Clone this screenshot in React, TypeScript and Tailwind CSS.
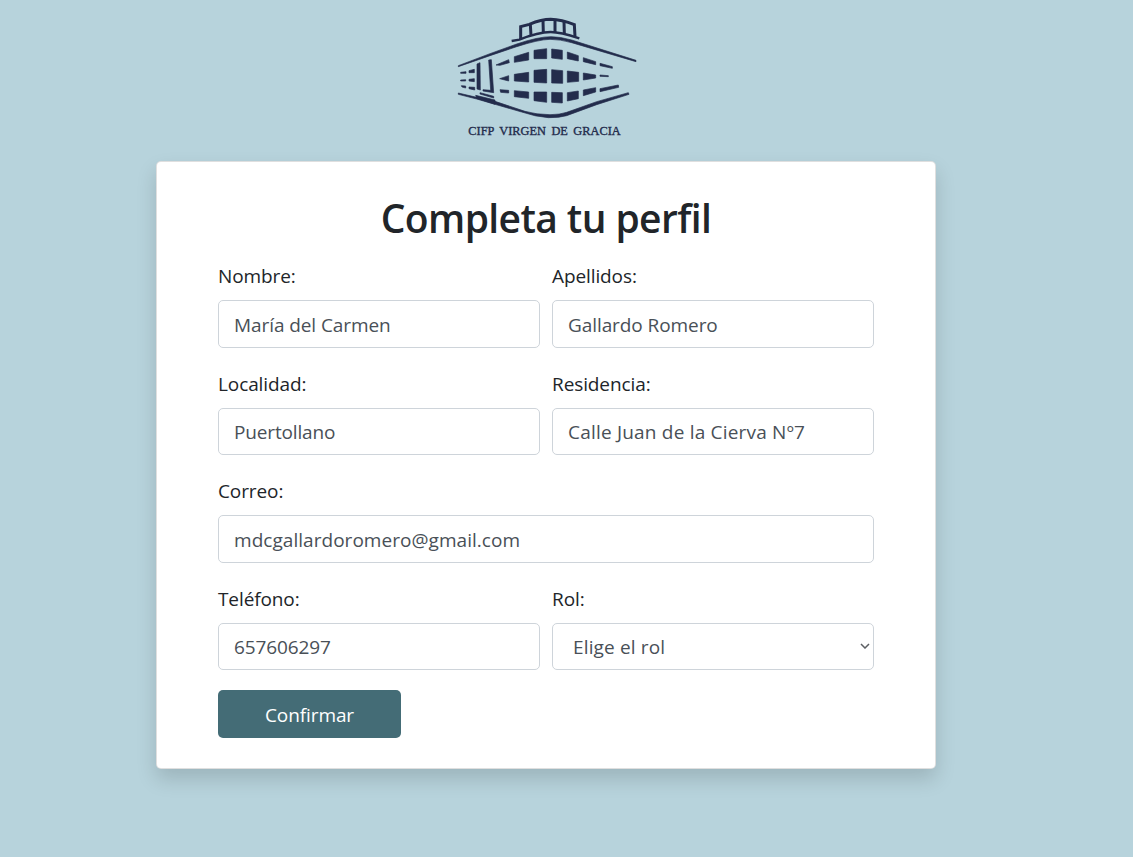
import React from "react";

const ink = "#232c4c";

const windows = [
  "138,165 176,149 178,158 150,166",
  "193,140 236,127 236,150 193,157",
  "252,121 290,116 290,146 252,146",
  "305,117 337,121 337,148 305,144",
  "352,126 385,137 385,153 352,146",
  "400,143 437,155 437,164 400,155",
  "450,160 487,170 487,175 450,167",
  "149,206 176,197 176,213",
  "193,193 236,187 236,216 193,213",
  "252,181 290,178 290,219 252,217",
  "305,179 338,182 338,220 305,219",
  "352,183 386,187 386,214 352,217",
  "400,189 437,195 437,204 400,210",
  "450,195 475,197 475,200 450,199",
  "150,239 176,241 176,249 152,247",
  "193,242 236,246 236,265 193,260",
  "252,246 290,246 290,277 252,272",
  "305,247 337,248 337,279 305,277",
  "352,248 385,243 385,266 352,273",
  "400,240 437,233 437,246 400,257",
  "450,236 505,225 506,232 450,245",
  "32,187 48,185 48,190 32,190",
  "57,182 73,178 73,188 57,188",
  "32,210 47,209 47,213 32,213",
  "57,208 73,206 73,215 57,213",
  "34,227 47,228 47,234 36,231",
  "57,231 74,232 74,240 57,236",
  "81,162 90,158 91,240 81,237",
  "116,150 124,149 131,248 99,243 99,239 122,241",
  "90,248 131,259 131,264 90,252",
  "77,256 135,270 135,283 80,265",
];

function Logo() {
  return (
    <svg className="h-[135px] w-[190px]" viewBox="0 0 570 405" role="img" aria-label="CIFP Virgen de Gracia">
      <g fill={ink} stroke={ink} strokeWidth="2" strokeLinejoin="round">
        {windows.map((points) => (
          <polygon key={points} points={points} />
        ))}
        <path d="M25 167 L120 131 L200 102 Q265 80 303 80 Q330 80 365 90 L558 151 L558 155 L365 98 Q330 88 300 88 Q265 89 200 110 L120 137 L25 170 Z" />
        <path d="M25 249 L80 262 L135 274 L225 304 Q260 314 300 314 Q330 314 350 307 L440 275 L535 248 L537 253 L440 284 L350 317 Q325 324 295 323 Q255 320 215 306 L135 283 L80 267 L25 253 Z" />
      </g>
      <g fill="none" stroke={ink} strokeWidth="9">
        <path d="M185 93 L208 89 Q265 66 302 66 Q330 66 388 85" strokeWidth="7" />
        <path d="M212 88 V50 L238 43 Q275 28 302 28 Q335 29 373 44 L375 80" />
        <path d="M241 44 L243 76 M279 32 L280 68 M315 30 V66 M342 34 L343 71" />
      </g>
      <text
        x="55"
        y="376"
        fill={ink}
        stroke={ink}
        strokeWidth="1"
        fontSize="35"
        wordSpacing="7"
        fontFamily="'Liberation Serif', serif"
        textLength="457"
        lengthAdjust="spacingAndGlyphs"
      >
        CIFP VIRGEN DE GRACIA
      </text>
    </svg>
  );
}

const control =
  "block h-[47.5px] w-full rounded-[5px] border border-[#ced4da] bg-white px-[15px] pt-[2px] text-[19px] text-[#495057] outline-none";

function Field({ id, label, wide, children }: { id: string; label: string; wide?: boolean; children: React.ReactNode }) {
  return (
    <div className={wide ? "col-span-2" : ""}>
      <label htmlFor={id} className="mb-[9px] block h-[31px] pt-px text-[19px] leading-[30px] tracking-[-0.1px]">
        {label}
      </label>
      {children}
    </div>
  );
}

export default function App() {
  return (
    <main className="min-h-[857px] bg-[#b7d3dc] pt-[10px] font-['Open_Sans',sans-serif] text-[#212529]">
      <header className="flex w-[1090px] justify-center">
        <Logo />
      </header>
      <section className="ml-[156px] mt-[16px] h-[608px] w-[780px] rounded-[5px] border border-black/[0.125] bg-white px-[61px] pt-[32px] shadow-[0_10px_20px_rgba(0,0,0,0.15)]">
        <h1 className="h-[48px] text-center text-[39px] font-semibold leading-[47px] tracking-[-0.6px]">Completa tu perfil</h1>
        <form className="mt-[18px]">
          <div className="grid grid-cols-2 gap-x-3 gap-y-5">
            <Field id="nombre" label="Nombre:">
              <input id="nombre" className={`${control} tracking-[-0.08px]`} defaultValue="María del Carmen" />
            </Field>
            <Field id="apellidos" label="Apellidos:">
              <input id="apellidos" className={`${control} tracking-[-0.08px]`} defaultValue="Gallardo Romero" />
            </Field>
            <Field id="localidad" label="Localidad:">
              <input id="localidad" className={`${control} tracking-[-0.15px]`} defaultValue="Puertollano" />
            </Field>
            <Field id="residencia" label="Residencia:">
              <input id="residencia" className={`${control} tracking-[0.2px]`} defaultValue="Calle Juan de la Cierva Nº7" />
            </Field>
            <Field id="correo" label="Correo:" wide>
              <input id="correo" type="email" className={`${control} tracking-[0.04px]`} defaultValue="mdcgallardoromero@gmail.com" />
            </Field>
            <Field id="telefono" label="Teléfono:">
              <input id="telefono" type="tel" className={`${control} tracking-[-0.1px]`} defaultValue="657606297" />
            </Field>
            <Field id="rol" label="Rol:">
              <div className="relative">
                <select
                  id="rol"
                  className="block h-[47.5px] w-full appearance-none rounded-[5px] border border-[#ced4da] bg-white px-[20px] pt-[2px] text-[19px] tracking-[0.15px] text-[#495057] outline-none"
                >
                  <option>Elige el rol</option>
                </select>
                <svg
                  className="pointer-events-none absolute right-[4px] top-[20px] h-[6px] w-[10px]"
                  viewBox="0 0 10 6"
                  fill="none"
                  stroke="#5c5f63"
                  strokeWidth="1.5"
                >
                  <path d="M1 1 L5 5 L9 1" />
                </svg>
              </div>
            </Field>
          </div>
          <button
            type="button"
            className="mt-5 h-[48px] w-[183px] rounded-[5px] bg-[#446c76] pt-[2px] text-[19px] tracking-[-0.1px] text-white"
          >
            Confirmar
          </button>
        </form>
      </section>
    </main>
  );
}
